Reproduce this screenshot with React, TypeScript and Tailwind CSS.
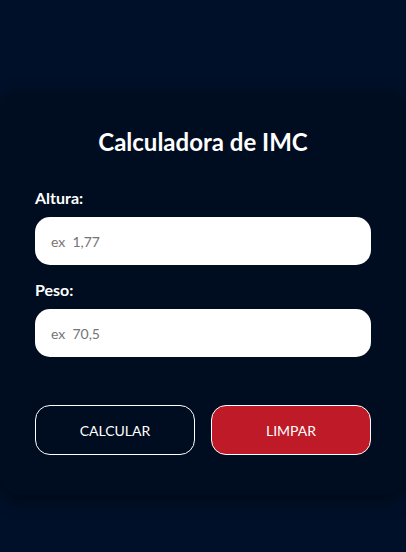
export default function App() {
  return (
    <div
      className="min-h-[552px] bg-[#001029] pt-[93px]"
      style={{ fontFamily: "Lato, 'Open Sans', sans-serif" }}
    >
      <div className="mx-auto w-[406px] rounded-[20px] bg-[#000c1f] px-[35px] pt-[34px] pb-[40px] shadow-[0_4px_18px_rgba(0,0,0,0.55)]">
        <h1 className="text-center text-[24px] font-bold leading-[30px] text-white">
          Calculadora de IMC
        </h1>

        <label className="mt-[31px] block text-[16px] font-bold leading-[20px] text-white">
          Altura:
        </label>
        <input
          className="mt-[9px] block h-[48px] w-full rounded-[15px] bg-white px-[16px] text-[14px] text-gray-800 outline-none placeholder:text-[#757575]"
          placeholder="ex  1,77"
        />

        <label className="mt-[15px] block text-[16px] font-bold leading-[20px] text-white">
          Peso:
        </label>
        <input
          className="mt-[9px] block h-[48px] w-full rounded-[15px] bg-white px-[16px] text-[14px] text-gray-800 outline-none placeholder:text-[#757575]"
          placeholder="ex  70,5"
        />

        <div className="mt-[48px] grid grid-cols-2 gap-[16px]">
          <button className="h-[50px] rounded-[15px] border border-white bg-[#000c1f] text-[14px] uppercase text-white">
            Calcular
          </button>
          <button className="h-[50px] rounded-[15px] border border-white bg-[#be1a28] text-[14px] uppercase text-white">
            Limpar
          </button>
        </div>
      </div>
    </div>
  );
}
